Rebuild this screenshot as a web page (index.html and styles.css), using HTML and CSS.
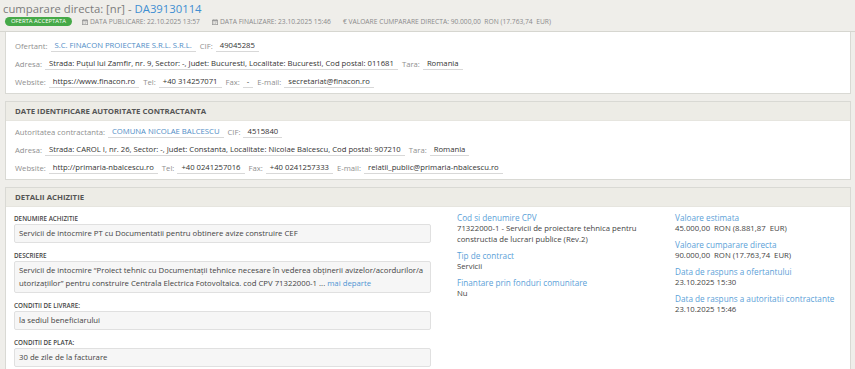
FILE: index.html
```html
<!DOCTYPE html>
<html lang="ro">
<head>
    <meta charset="UTF-8">
    <title>cumparare directa: [nr] - DA39130114</title>
    <link rel="stylesheet" href="styles.css">
</head>
<body>
    <div class="head">
        <h1 class="title">cumparare directa: [nr] - <span class="nr">DA39130114</span></h1>
        <div class="meta">
            <span class="badge">OFERTA ACCEPTATA</span>
            <span class="meta-item">
                <svg class="cal" viewBox="0 0 8 8" width="6" height="6"><rect x="0.5" y="1.5" width="7" height="6" fill="none" stroke="#999" stroke-width="1"/><rect x="0.5" y="1.5" width="7" height="1.6" fill="#999"/><rect x="2" y="0" width="1" height="2" fill="#999"/><rect x="5" y="0" width="1" height="2" fill="#999"/><path d="M2 4.5h1M4 4.5h1M6 4.5h0.8M2 6h1M4 6h1" stroke="#999" stroke-width="0.8"/></svg>
                DATA PUBLICARE: 22.10.2025 13:57
            </span>
            <span class="meta-item">
                <svg class="cal" viewBox="0 0 8 8" width="6" height="6"><rect x="0.5" y="1.5" width="7" height="6" fill="none" stroke="#999" stroke-width="1"/><rect x="0.5" y="1.5" width="7" height="1.6" fill="#999"/><rect x="2" y="0" width="1" height="2" fill="#999"/><rect x="5" y="0" width="1" height="2" fill="#999"/><path d="M2 4.5h1M4 4.5h1M6 4.5h0.8M2 6h1M4 6h1" stroke="#999" stroke-width="0.8"/></svg>
                DATA FINALIZARE: 23.10.2025 15:46
            </span>
            <span class="meta-item">&euro; VALOARE CUMPARARE DIRECTA: 90.000,00&nbsp; RON (17.763,74&nbsp; EUR)</span>
        </div>
    </div>

    <div class="card card-first">
        <div class="card-body">
            <div class="row">
                <span class="lbl">Ofertant:</span><span class="val link">S.C. FINACON PROIECTARE S.R.L. S.R.L.</span>
                <span class="lbl">CIF:</span><span class="val">49045285</span>
            </div>
            <div class="row">
                <span class="lbl">Adresa:</span><span class="val">Strada: Puțul lui Zamfir, nr. 9, Sector: -, Judet: Bucuresti, Localitate: Bucuresti, Cod postal: 011681</span>
                <span class="lbl">Tara:</span><span class="val">Romania</span>
            </div>
            <div class="row">
                <span class="lbl">Website:</span><span class="val">https://www.finacon.ro</span>
                <span class="lbl">Tel:</span><span class="val">+40 314257071</span>
                <span class="lbl">Fax:</span><span class="val">-</span>
                <span class="lbl">E-mail:</span><span class="val">secretariat@finacon.ro</span>
            </div>
        </div>
    </div>

    <div class="card">
        <div class="card-head">DATE IDENTIFICARE AUTORITATE CONTRACTANTA</div>
        <div class="card-body card-body-tight">
            <div class="row">
                <span class="lbl">Autoritatea contractanta:</span><span class="val link">COMUNA NICOLAE BALCESCU</span>
                <span class="lbl">CIF:</span><span class="val">4515840</span>
            </div>
            <div class="row">
                <span class="lbl">Adresa:</span><span class="val">Strada: CAROL I, nr. 26, Sector: -, Judet: Constanta, Localitate: Nicolae Balcescu, Cod postal: 907210</span>
                <span class="lbl">Tara:</span><span class="val">Romania</span>
            </div>
            <div class="row">
                <span class="lbl">Website:</span><span class="val">http://primaria-nbalcescu.ro</span>
                <span class="lbl">Tel:</span><span class="val">+40 0241257016</span>
                <span class="lbl">Fax:</span><span class="val">+40 0241257333</span>
                <span class="lbl">E-mail:</span><span class="val">relatii_public@primaria-nbalcescu.ro</span>
            </div>
        </div>
    </div>

    <div class="card">
        <div class="card-head">DETALII ACHIZITIE</div>
        <div class="details">
            <div class="col-main">
                <div class="field-lbl">DENUMIRE ACHIZITIE</div>
                <div class="field-box">Servicii de intocmire PT cu Documentatii pentru obtinere avize construire CEF</div>
                <div class="field-lbl">DESCRIERE</div>
                <div class="field-box">Servicii de intocmire “Proiect tehnic cu Documentații tehnice necesare în vederea obținerii avizelor/acordurilor/a utorizațiilor” pentru construire Centrala Electrica Fotovoltaica. cod CPV 71322000-1 ... <a class="more" href="#">mai departe</a></div>
                <div class="field-lbl">CONDITII DE LIVRARE:</div>
                <div class="field-box">la sediul beneficiarului</div>
                <div class="field-lbl">CONDITII DE PLATA:</div>
                <div class="field-box">30 de zile de la facturare</div>
            </div>
            <div class="col-info">
                <div class="info">
                    <div class="info-lbl">Cod si denumire CPV</div>
                    <div class="info-val">71322000-1 - Servicii de proiectare tehnica pentru constructia de lucrari publice (Rev.2)</div>
                </div>
                <div class="info">
                    <div class="info-lbl">Tip de contract</div>
                    <div class="info-val">Servicii</div>
                </div>
                <div class="info">
                    <div class="info-lbl">Finantare prin fonduri comunitare</div>
                    <div class="info-val">Nu</div>
                </div>
            </div>
            <div class="col-info">
                <div class="info">
                    <div class="info-lbl">Valoare estimata</div>
                    <div class="info-val">45.000,00&nbsp; RON (8.881,87&nbsp; EUR)</div>
                </div>
                <div class="info">
                    <div class="info-lbl">Valoare cumparare directa</div>
                    <div class="info-val">90.000,00&nbsp; RON (17.763,74&nbsp; EUR)</div>
                </div>
                <div class="info">
                    <div class="info-lbl">Data de raspuns a ofertantului</div>
                    <div class="info-val">23.10.2025 15:30</div>
                </div>
                <div class="info">
                    <div class="info-lbl">Data de raspuns a autoritatii contractante</div>
                    <div class="info-val">23.10.2025 15:46</div>
                </div>
            </div>
        </div>
    </div>
</body>
</html>
```

FILE: styles.css
```css
body {
    margin: 0;
    padding: 0 4px 0 5px;
    background-color: #efeeea;
    font-family: "Open Sans", "DejaVu Sans", sans-serif;
    color: #444;
}

/* Page heading */
.head {
    margin: 0 -4px 0 -5px;
    padding: 2px 4px 4px 3px;
    border-bottom: 1px solid #d6d6d0;
}

.title {
    margin: 0;
    font-size: 11.3px;
    line-height: 14px;
    font-weight: 400;
    color: #7c7c7c;
}

.title .nr {
    color: #3f8fd2;
}

.meta {
    display: flex;
    align-items: center;
    height: 11px;
    padding-left: 2px;
    font-size: 6.7px;
    color: #8a8a8a;
    white-space: nowrap;
}

.badge {
    background-color: #45a948;
    color: #fff;
    border-radius: 5px;
    padding: 0 6px;
    height: 9px;
    line-height: 9px;
    font-size: 5.9px;
    margin-right: 10px;
}

.meta-item {
    display: flex;
    align-items: center;
    gap: 2px;
    margin-right: 12px;
}

.cal {
    display: block;
}

/* Cards */
.card {
    background-color: #fff;
    border: 1px solid #d9d9d4;
    margin-bottom: 7px;
}

.card-first {
    border-top: none;
}

.card-head {
    background-color: #edece6;
    height: 18px;
    line-height: 18px;
    padding-left: 9px;
    font-size: 7.8px;
    font-weight: 700;
    color: #555;
    border-bottom: 1px solid #e6e5df;
}

.card-body {
    padding: 8px 9px 5px;
    font-size: 7.7px;
}

.card-body-tight {
    padding-top: 5px;
    padding-bottom: 5px;
}

.row {
    display: flex;
    align-items: flex-end;
    line-height: 11px;
    margin-bottom: 6px;
    white-space: nowrap;
}

.row:last-child {
    margin-bottom: 0;
}

.lbl {
    color: #8f8f8f;
    margin-right: 3px;
}

.val {
    color: #333;
    padding: 0 4px;
    margin-right: 4px;
    border-bottom: 1px solid #d8d8d8;
}

.val.link {
    color: #4f8dc6;
}

/* Detalii achizitie */
.details {
    display: grid;
    grid-template-columns: 417px 192px 1fr;
    column-gap: 26px;
    padding: 3px 4px 2px 8px;
}

.field-lbl {
    font-size: 6.3px;
    font-weight: 600;
    line-height: 9px;
    margin: 8px 0 1px;
    color: #444;
}

.field-lbl:first-child {
    margin-top: 4px;
}

.field-box {
    background-color: #f6f6f6;
    border: 1px solid #e0e0e0;
    border-radius: 2px;
    padding: 2px 4px;
    font-size: 7.75px;
    line-height: 13px;
    color: #444;
}

.more {
    color: #4f95d3;
    text-decoration: none;
}

.col-info {
    padding-top: 1.5px;
}

.info {
    margin-bottom: 5px;
}

.info-lbl {
    font-size: 8.2px;
    line-height: 11px;
    color: #5b9fd8;
    white-space: nowrap;
}

.info-val {
    font-size: 7.75px;
    line-height: 11px;
    color: #444;
}
```
